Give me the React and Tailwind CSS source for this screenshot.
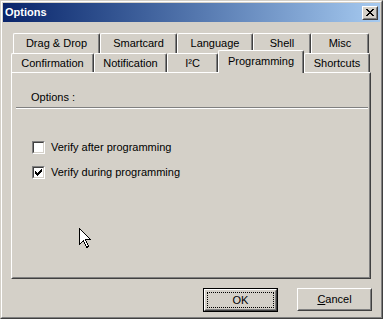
import React from "react";

const font = { fontFamily: '"Liberation Sans", Arial, sans-serif' };

const Tab = ({ label, width, selected }) => {
  return (
    <div
      className={`flex items-start justify-center border-t border-l border-white rounded-tl-[2px] rounded-tr-[2px] bg-[#d4d0c8] border-r border-r-[#404040] shadow-[inset_-1px_0_0_#808080] text-[11px] leading-[13px] text-black ${
        selected ? "h-[23px] -mt-[3px] relative z-10 pt-[4px]" : "h-[20px] pt-[3px]"
      }`}
      style={{ width }}
    >
      {label}
    </div>
  );
};

const Checkbox = ({ checked, label }) => (
  <div className="flex items-center h-[13px]">
    <div className="w-[13px] h-[13px] border border-t-[#808080] border-l-[#808080] border-r-white border-b-white">
      <div className="w-full h-full bg-white border border-t-[#404040] border-l-[#404040] border-r-[#d4d0c8] border-b-[#d4d0c8] flex items-center justify-center">
        {checked && (
          <svg width="7" height="7" viewBox="0 0 7 7" shapeRendering="crispEdges">
            <path d="M0 2h1v1h-1zM0 3h2v1h-2zM0 4h3v1h-3zM1 5h2v1h-2zM2 6h1v1h-1zM3 3h1v3h-1zM4 2h1v3h-1zM5 1h1v3h-1zM6 0h1v3h-1z" fill="#000" />
          </svg>
        )}
      </div>
    </div>
    <span className="ml-[6px] text-[11px] leading-[13px] text-black">{label}</span>
  </div>
);

const Button = ({ children, isDefault }) => {
  if (isDefault) {
    return (
      <div className="w-[75px] h-[24px] border border-black">
        <div className="w-full h-full border border-t-white border-l-white border-r-[#404040] border-b-[#404040]">
          <div className="w-full h-full border border-t-[#d4d0c8] border-l-[#d4d0c8] border-r-[#808080] border-b-[#808080] p-px">
            <div className="w-full h-full border border-dotted border-black flex items-center justify-center text-[11px] leading-[13px]">
              {children}
            </div>
          </div>
        </div>
      </div>
    );
  }
  return (
    <div className="w-[75px] h-[23px] border border-t-white border-l-white border-r-[#404040] border-b-[#404040]">
      <div className="w-full h-full border border-t-[#d4d0c8] border-l-[#d4d0c8] border-r-[#808080] border-b-[#808080] flex items-center justify-center text-[11px] leading-[13px]">
        {children}
      </div>
    </div>
  );
};

export default function App() {
  return (
    <div className="w-[383px] h-[319px] bg-[#d4d0c8] relative overflow-hidden" style={font}>
      <div className="w-full h-full border border-t-[#d4d0c8] border-l-[#d4d0c8] border-r-[#404040] border-b-[#404040]">
        <div className="w-full h-full border border-t-white border-l-white border-r-[#808080] border-b-[#808080] p-px flex flex-col">
          {/* title bar */}
          <div className="h-[19px] flex items-center justify-between pl-[2px] pr-[2px] bg-gradient-to-r from-[#0a246a] to-[#a6caf0]">
            <span className="text-white font-bold text-[11px] leading-[13px]">Options</span>
            <div className="w-[16px] h-[14px] border border-t-white border-l-white border-r-[#404040] border-b-[#404040] bg-[#d4d0c8]">
              <div className="w-full h-full border border-t-[#d4d0c8] border-l-[#d4d0c8] border-r-[#808080] border-b-[#808080] flex items-center justify-center">
                <svg width="8" height="7" viewBox="0 0 8 7" shapeRendering="crispEdges">
                  <path d="M0 0h2v1h-2zM6 0h2v1h-2zM1 1h2v1h-2zM5 1h2v1h-2zM2 2h4v1h-4zM3 3h2v1h-2zM2 4h4v1h-4zM1 5h2v1h-2zM5 5h2v1h-2zM0 6h2v1h-2zM6 6h2v1h-2z" fill="#000" />
                </svg>
              </div>
            </div>
          </div>

          {/* tab control */}
          <div className="ml-[8px] mt-[11px] w-[360px] flex flex-col">
            <div className="flex pl-[2px] h-[20px]">
              <Tab label="Drag & Drop" width={87} />
              <Tab label="Smartcard" width={77} />
              <Tab label="Language" width={76} />
              <Tab label="Shell" width={58} />
              <Tab label="Misc" width={58} />
            </div>
            <div className="flex h-[19px] items-start">
              <Tab label="Confirmation" width={83} />
              <Tab label="Notification" width={73} />
              <Tab label="I²C" width={51} />
              <Tab label="Programming" width={86} selected />
              <Tab label="Shortcuts" width={66} />
            </div>
            <div className="h-[207px] border border-t-white border-l-white border-r-[#404040] border-b-[#404040]">
              <div className="w-full h-full border border-transparent border-r-[#808080] border-b-[#808080] pl-[3px] flex flex-col">
                <div className="mt-[17px] ml-[15px] text-[11px] leading-[13px]">Options :</div>
                <div className="mt-[3px] w-[352px] h-[2px] border-t border-t-[#808080] border-b border-b-white" />
                <div className="mt-[32px] ml-[16px]">
                  <Checkbox label="Verify after programming" />
                </div>
                <div className="mt-[12px] ml-[16px]">
                  <Checkbox checked label="Verify during programming" />
                </div>
              </div>
            </div>
          </div>

          {/* buttons */}
          <div className="flex justify-end gap-[19px] mt-[9px] pr-[8px]">
            <Button isDefault>OK</Button>
            <Button>
              <span>
                <span className="underline">C</span>ancel
              </span>
            </Button>
          </div>
        </div>
      </div>

      {/* mouse pointer */}
      <svg className="absolute left-[79px] top-[228px]" width="13" height="21" viewBox="0 0 13 21" shapeRendering="crispEdges">
        <path d="M0.5 0.5 L0.5 16.5 L4.5 12.5 L7.5 19.5 L9.5 18.5 L6.5 11.5 L11.5 11.5 Z" fill="#fff" stroke="#000" strokeWidth="1" />
      </svg>
    </div>
  );
}
